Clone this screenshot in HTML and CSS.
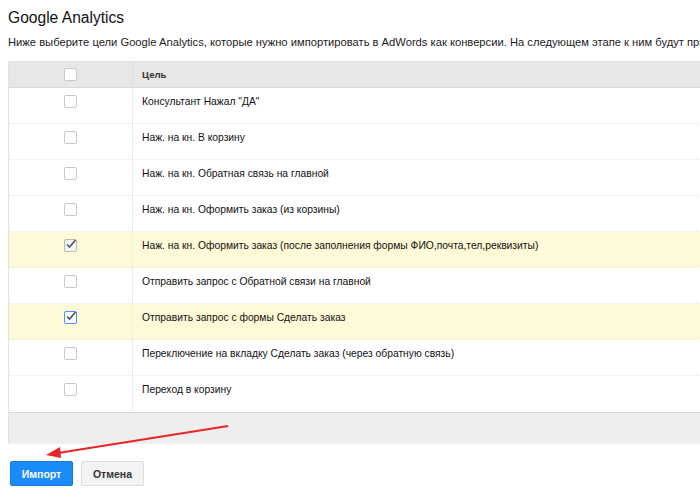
FILE: index.html
```html
<!DOCTYPE html>
<html lang="ru">
<head>
<meta charset="utf-8">
<link rel="stylesheet" href="styles.css">
</head>
<body>
<div class="page">
  <h1 class="title">Google Analytics</h1>
  <p class="lead">Ниже выберите цели Google Analytics, которые нужно импортировать в AdWords как конверсии. На следующем этапе к ним будут применены настройки</p>
  <div class="panel">
    <div class="row head">
      <div class="cell check"><span class="box"></span></div>
      <div class="cell name">Цель</div>
    </div>
    <div class="row"><div class="cell check"><span class="box"></span></div><div class="cell name">Консультант Нажал "ДА"</div></div>
    <div class="row"><div class="cell check"><span class="box"></span></div><div class="cell name">Наж. на кн. В корзину</div></div>
    <div class="row"><div class="cell check"><span class="box"></span></div><div class="cell name">Наж. на кн. Обратная связь на главной</div></div>
    <div class="row"><div class="cell check"><span class="box"></span></div><div class="cell name">Наж. на кн. Оформить заказ (из корзины)</div></div>
    <div class="row sel"><div class="cell check"><span class="box on gray"><svg viewBox="0 0 13 13" width="13" height="13"><path d="M3 6.5 L5.5 9 L11.5 2" fill="none" stroke="#555" stroke-width="1.6"/></svg></span></div><div class="cell name">Наж. на кн. Оформить заказ (после заполнения формы ФИО,почта,тел,реквизиты)</div></div>
    <div class="row"><div class="cell check"><span class="box"></span></div><div class="cell name">Отправить запрос с Обратной связи на главной</div></div>
    <div class="row sel"><div class="cell check"><span class="box on blue"><svg viewBox="0 0 13 13" width="13" height="13"><path d="M3 6.5 L5.5 9 L11.5 2" fill="none" stroke="#3b5573" stroke-width="1.6"/></svg></span></div><div class="cell name">Отправить запрос с формы Сделать заказ</div></div>
    <div class="row"><div class="cell check"><span class="box"></span></div><div class="cell name">Переключение на вкладку Сделать заказ (через обратную связь)</div></div>
    <div class="row last"><div class="cell check"><span class="box"></span></div><div class="cell name">Переход в корзину</div></div>
    <div class="foot"></div>
  </div>
  <div class="actions">
    <button class="btn primary">Импорт</button>
    <button class="btn">Отмена</button>
  </div>
</div>
<svg class="arrow" width="700" height="498" viewBox="0 0 700 498">
  <line x1="228" y1="426" x2="58" y2="453" stroke="#e8262a" stroke-width="2.2"/>
  <path d="M46 455 L60 447 L61 458 Z" fill="#e8262a"/>
</svg>
</body>
</html>
```
FILE: styles.css
```css
html, body {
  margin: 0;
  padding: 0;
  overflow: hidden;
  background: #fff;
}
body {
  font-family: "Liberation Sans", Arial, sans-serif;
  color: #111;
  width: 700px;
  height: 498px;
  position: relative;
}
.page {
  padding: 8px 0 0 8px;
}
.title {
  margin: 0;
  font-size: 15.6px;
  line-height: 20px;
  font-weight: normal;
  color: #111;
}
.lead {
  margin: 6px 0 0 0;
  font-size: 11.2px;
  line-height: 16px;
  white-space: nowrap;
  overflow: hidden;
  color: #222;
}
.panel {
  margin-top: 11px;
  width: 720px;
  border-left: 1px solid #e2e2e2;
}
.row {
  display: flex;
  height: 36px;
  border-bottom: 1px dotted #e6e6e6;
  box-sizing: border-box;
  background: #fff;
}
.row.head {
  height: 27px;
  background: #e7e7e7;
  border-top: 1px solid #e0e0e0;
  border-bottom: 1px solid #dadada;
}
.row.sel {
  background: #fef9d6;
}
.row.last {
  height: 37px;
  border-bottom: 1px solid #d8d8d8;
}
.cell {
  display: flex;
  align-items: flex-start;
  padding-top: 7px;
  box-sizing: border-box;
  font-size: 10.3px;
  line-height: 13px;
  color: #111;
}
.head .cell {
  align-items: center;
  padding-top: 0;
}
.check {
  width: 124px;
  justify-content: center;
  border-right: 1px solid #ededed;
}
.head .check {
  border-right: 1px solid #dcdcdc;
}
.name {
  padding-left: 9px;
  flex: 1;
}
.head .name {
  font-weight: bold;
  font-size: 9.6px;
  color: #333;
}
.box {
  display: block;
  width: 13px;
  height: 13px;
  box-sizing: border-box;
  border: 1px solid #c8c8c8;
  border-radius: 2px;
  background: #fff;
  position: relative;
}
.box svg {
  position: absolute;
  left: -1px;
  top: -2px;
}
.box.gray {
  border-color: #b8b8b8;
  background: #f4f4f4;
}
.box.blue {
  border-color: #4d8ff5;
}
.foot {
  height: 30px;
  background: #eeeeee;
  border-bottom: 1px solid #f2f2f2;
}
.actions {
  display: flex;
  gap: 8px;
  margin-top: 17px;
  padding-left: 2px;
}
.btn {
  height: 25px;
  width: 63px;
  padding: 0;
  font-family: "Liberation Sans", Arial, sans-serif;
  font-size: 10.5px;
  font-weight: bold;
  color: #333;
  background: #f3f3f3;
  border: 1px solid #dcdcdc;
  border-radius: 2px;
}
.btn.primary {
  background: #1a8bf8;
  border-color: #1778dd;
  color: #fff;
}
.arrow {
  position: absolute;
  left: 0;
  top: 0;
  pointer-events: none;
}
```
